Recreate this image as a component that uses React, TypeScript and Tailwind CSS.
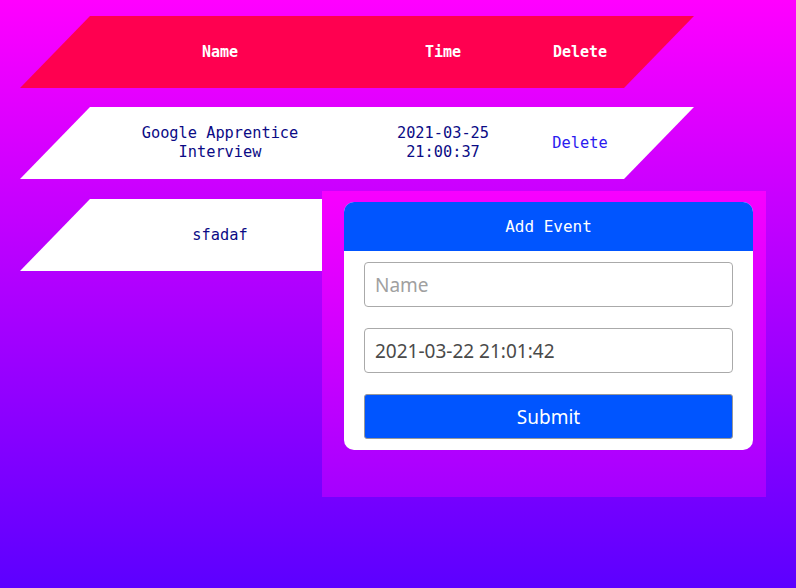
import React from "react";

const mono = { fontFamily: '"DejaVu Sans Mono", "Liberation Mono", monospace' };

function Row({ kind, name, time, del, extra = "" }: { kind: "head" | "row"; name: React.ReactNode; time?: React.ReactNode; del?: string; extra?: string }) {
  const head = kind === "head";
  return (
    <div
      className={`flex h-[72px] w-[674px] items-center leading-[19px] ${extra} ${head ? "bg-[#ff0050] text-[15px] font-bold text-white" : "bg-white text-[15.3px] text-[#0b0b85]"}`}
      style={{ clipPath: "polygon(70px 0, 100% 0, calc(100% - 70px) 100%, 0 100%)", ...mono }}
    >
      <div className="w-[70px]" />
      <div className="w-[260px] text-center">{name}</div>
      <div className="w-[186px] text-center">{time}</div>
      <div className={`w-[88px] text-center ${head ? "" : "text-[#2a1aef]"}`}>{del}</div>
    </div>
  );
}

export default function App() {
  return (
    <div className="relative h-[588px] w-[796px] overflow-hidden bg-[linear-gradient(to_bottom,#ff00ff,#5c00ff)]">
      <div className="flex flex-col gap-[19px] pl-[20px] pt-[16px]">
        <Row kind="head" name="Name" time="Time" del="Delete" />
        <Row kind="row" name={<>Google Apprentice<br />Interview</>} time={<>2021-03-25<br />21:00:37</>} del="Delete" />
        <Row kind="row" name="sfadaf" time="" del="" extra="mt-px" />
      </div>
      <div className="absolute left-[322px] top-[191px] h-[306px] w-[444px] bg-[linear-gradient(to_bottom,#f800ff,#a400ff)] px-[22px] pt-[11px]">
        <div className="w-[409px] overflow-hidden rounded-[10px] bg-white">
          <div className="flex h-[49px] items-center justify-center bg-[#0055ff] pt-px text-[16px] text-white" style={mono}>
            Add Event
          </div>
          <div className="flex flex-col gap-[21px] px-[20px] pb-[11px] pt-[11px]" style={{ fontFamily: '"Noto Sans", "DejaVu Sans", sans-serif' }}>
            <input
              className="h-[45px] w-full rounded-[4px] border border-[#aaaaaa] px-[10px] text-[19px] text-[#444] outline-none placeholder:text-[#a0a0a0]"
              placeholder="Name"
            />
            <input
              className="h-[45px] w-full rounded-[4px] border border-[#aaaaaa] px-[10px] text-[19px] text-[#4a4a4a] outline-none"
              defaultValue="2021-03-22 21:01:42"
            />
            <button className="h-[45px] w-full rounded-[3px] border border-[#999999] bg-[#0055ff] pt-px text-[19px] text-white">
              Submit
            </button>
          </div>
        </div>
      </div>
    </div>
  );
}
